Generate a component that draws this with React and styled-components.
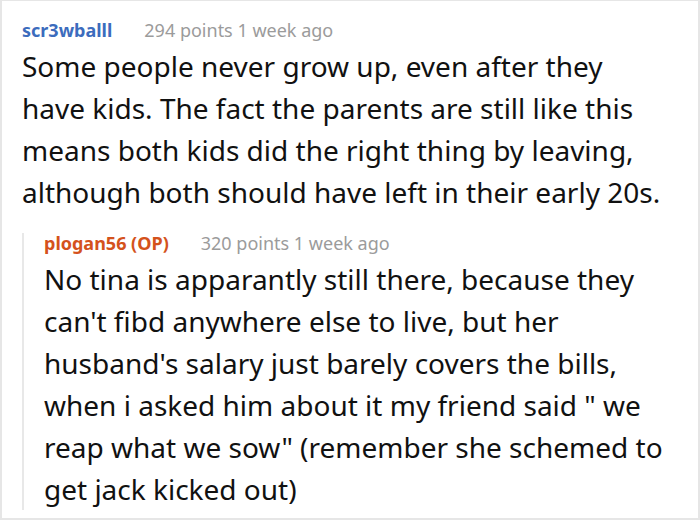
import React from "react";
import styled, { createGlobalStyle } from "styled-components";

const GlobalStyle = createGlobalStyle`
  html, body {
    margin: 0;
    padding: 0;
    background: #ffffff;
  }
  body {
    font-family: "Noto Sans", "Open Sans", sans-serif;
  }
`;

const comment = {
  author: "scr3wballl",
  points: 294,
  age: "1 week ago",
  text: "Some people never grow up, even after they have kids. The fact the parents are still like this means both kids did the right thing by leaving, although both should have left in their early 20s.",
  reply: {
    author: "plogan56 (OP)",
    points: 320,
    age: "1 week ago",
    text: "No tina is apparantly still there, because they can't fibd anywhere else to live, but her husband's salary just barely covers the bills, when i asked him about it my friend said \" we reap what we sow\" (remember she schemed to get jack kicked out)",
  },
};

function App() {
  const { reply } = comment;
  return (
    <>
      <GlobalStyle />
      <Frame>
        <Header>
          <Author>{comment.author}</Author>
          <Meta>
            {comment.points} points {comment.age}
          </Meta>
        </Header>
        <Body>{comment.text}</Body>
        <Reply>
          <Header>
            <Author $op>{reply.author}</Author>
            <Meta>
              {reply.points} points {reply.age}
            </Meta>
          </Header>
          <Body>{reply.text}</Body>
        </Reply>
      </Frame>
    </>
  );
}

export default App;

const Frame = styled.div`
  box-sizing: border-box;
  width: 700px;
  height: 520px;
  border: 2px solid #e6e6e6;
  border-top-width: 1px;
  padding: 19px 33px 0 20px;
  overflow: hidden;
`;

const Header = styled.div`
  display: flex;
  align-items: baseline;
  gap: 32px;
  line-height: 20px;
`;

const Author = styled.span`
  font-size: 18px;
  font-weight: 700;
  color: ${(p) => (p.$op ? "#d4521c" : "#3c6cbd")};
`;

const Meta = styled.span`
  font-size: 18px;
  color: #9b9b9b;
`;

const Body = styled.div`
  font-size: 28px;
  line-height: 42px;
  color: #111111;
  margin-top: 5px;
`;

const Reply = styled.div`
  margin-top: 20px;
  border-left: 2px solid #e8e8e8;
  padding-left: 20px;
`;
